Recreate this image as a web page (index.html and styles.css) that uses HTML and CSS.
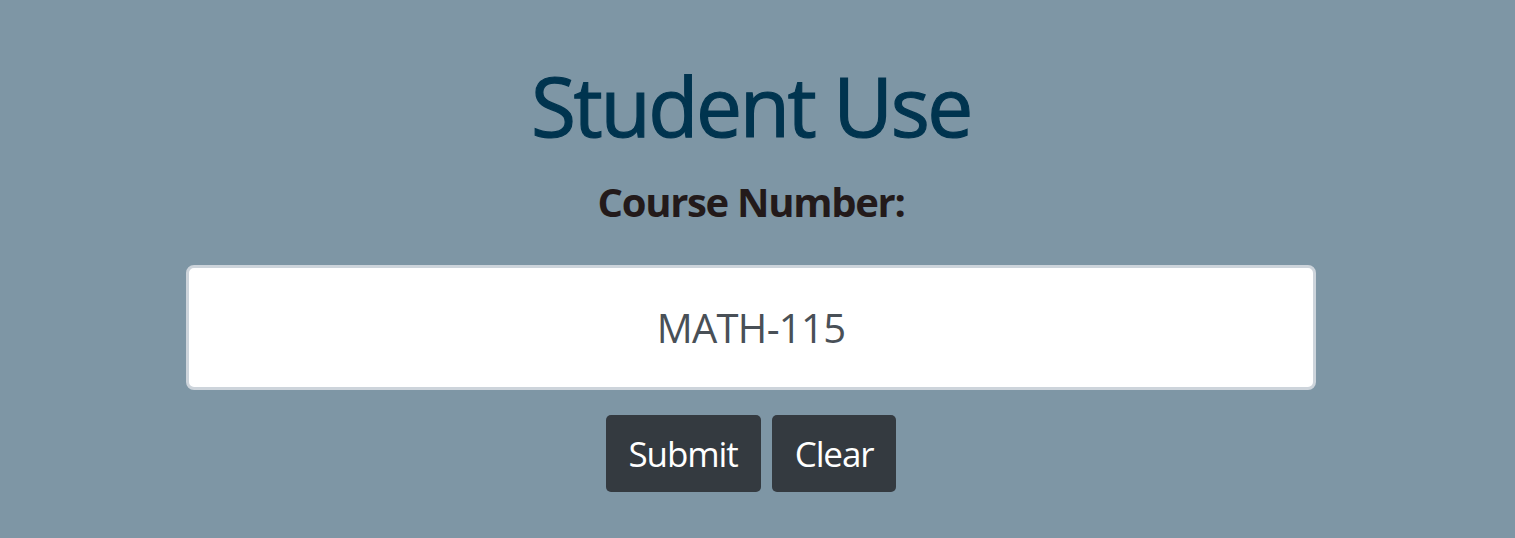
FILE: index.html
```html
<!DOCTYPE html>
<html lang="en">
<head>
<meta charset="utf-8">
<title>Student Use</title>
<link rel="stylesheet" href="styles.css">
</head>
<body>
<main class="page">
  <h1 class="title">Student Use</h1>
  <label class="label" for="course">Course Number:</label>
  <input class="course-input" id="course" type="text" value="MATH-115">
  <div class="actions">
    <button class="btn" type="button">Submit</button>
    <button class="btn" type="button">Clear</button>
  </div>
</main>
</body>
</html>
```
FILE: styles.css
```css
html, body {
  margin: 0;
  height: 100%;
}
body {
  background: #7e96a5;
  font-family: "Open Sans", "Noto Sans", sans-serif;
}
.page {
  display: flex;
  flex-direction: column;
  align-items: center;
  padding: 64px 13px 0 0;
}
.title {
  margin: 0;
  font-size: 82px;
  line-height: 82px;
  font-weight: 400;
  letter-spacing: -2.4px;
  color: #00344f;
  -webkit-text-stroke: 1.2px #00344f;
}
.label {
  margin-top: 35px;
  font-size: 40px;
  line-height: 42px;
  font-weight: 700;
  letter-spacing: -1.3px;
  color: #231a1a;
}
.course-input {
  margin-top: 42px;
  width: 1130px;
  height: 125px;
  box-sizing: border-box;
  border: 3px solid #cdd4db;
  border-radius: 8px;
  background: #fff;
  text-align: center;
  font-family: inherit;
  font-size: 40px;
  letter-spacing: -0.7px;
  color: #495057;
  outline: none;
}
.actions {
  display: flex;
  gap: 11px;
  margin-top: 25px;
}
.btn {
  height: 77px;
  padding: 0 23px;
  border: none;
  border-radius: 5px;
  background: #343a40;
  color: #fff;
  font-family: inherit;
  font-size: 35px;
  letter-spacing: -1.1px;
}
```
